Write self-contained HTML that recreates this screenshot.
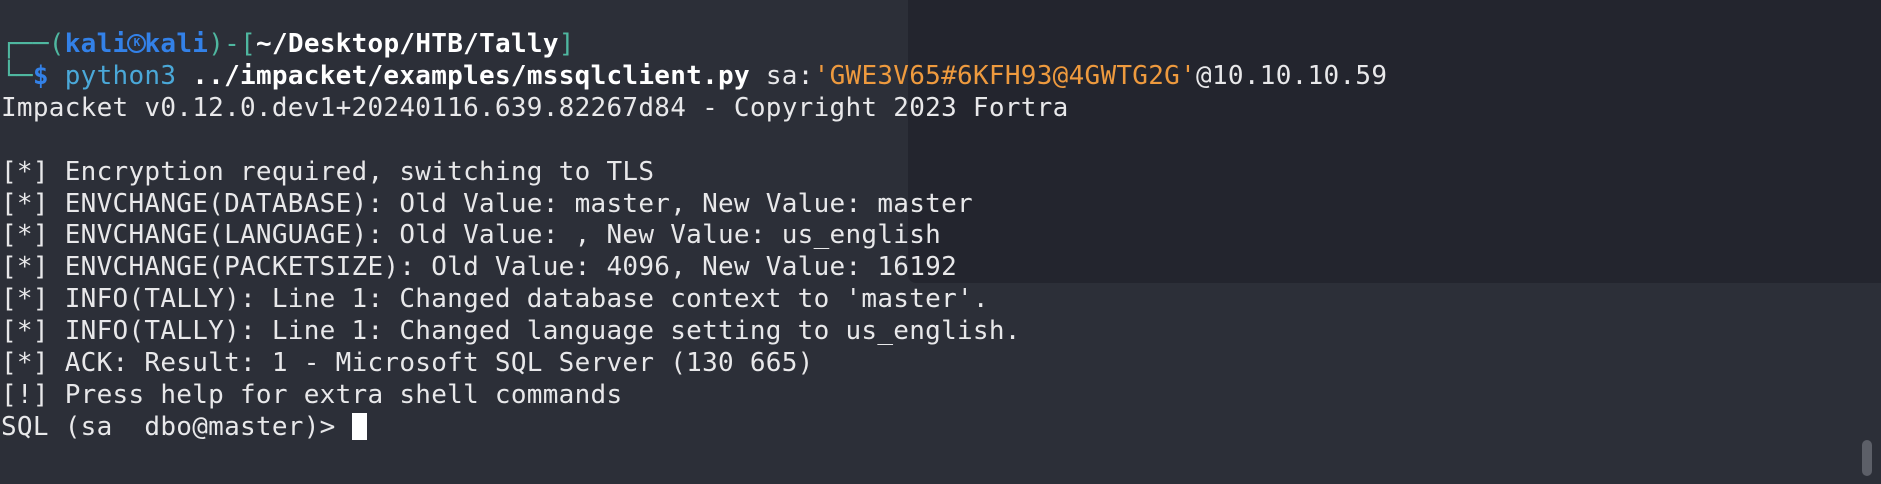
<!DOCTYPE html>
<html><head><meta charset="utf-8"><style>
html,body{margin:0;padding:0}
body{width:1881px;height:484px;background:#2c2f38;position:relative;overflow:hidden;font-family:"DejaVu Sans Mono","Liberation Mono",monospace;font-size:26px;letter-spacing:0.28px;color:#e8e8ea}
.dark{position:absolute;left:908px;top:0;width:973px;height:283px;background:#23252e;border-bottom-left-radius:8px}
.t{position:absolute;left:1px;top:29px;line-height:31.9px;white-space:pre}
.g{color:#4fb7a0}.b{color:#3381e8;font-weight:bold}.w{font-weight:bold;color:#fff}.p{color:#4aa8d8}.o{color:#ee9a3e}
.kw{display:inline-block;width:16px;height:20px;position:relative;vertical-align:-2px}
.k{position:absolute;left:-1px;top:0;width:19px;height:19px;border:2.5px solid #3381e8;border-radius:50%;box-sizing:border-box;font-size:11px;line-height:14px;text-align:center;letter-spacing:0}
.cur{display:inline-block;width:15px;height:27px;background:#fff;vertical-align:-5px}
.sb{position:absolute;left:1862px;top:440px;width:10px;height:36px;border-radius:5px;background:#5c5f68}
</style></head><body>
<div class="dark"></div>
<div class="t"><span class="g">┌──(</span><span class="b">kali<span class="kw"><span class="k">K</span></span>kali</span><span class="g">)-[</span><span class="w">~/Desktop/HTB/Tally</span><span class="g">]</span>
<span class="g">└─</span><span class="b">$</span> <span class="p">python3</span> <span class="w">../impacket/examples/mssqlclient.py</span> sa:<span class="o">'GWE3V65#6KFH93@4GWTG2G'</span>@10.10.10.59
Impacket v0.12.0.dev1+20240116.639.82267d84 - Copyright 2023 Fortra

[*] Encryption required, switching to TLS
[*] ENVCHANGE(DATABASE): Old Value: master, New Value: master
[*] ENVCHANGE(LANGUAGE): Old Value: , New Value: us_english
[*] ENVCHANGE(PACKETSIZE): Old Value: 4096, New Value: 16192
[*] INFO(TALLY): Line 1: Changed database context to 'master'.
[*] INFO(TALLY): Line 1: Changed language setting to us_english.
[*] ACK: Result: 1 - Microsoft SQL Server (130 665)
[!] Press help for extra shell commands
SQL (sa  dbo@master)> <span class="cur"></span></div>
<div class="sb"></div>
</body></html>
